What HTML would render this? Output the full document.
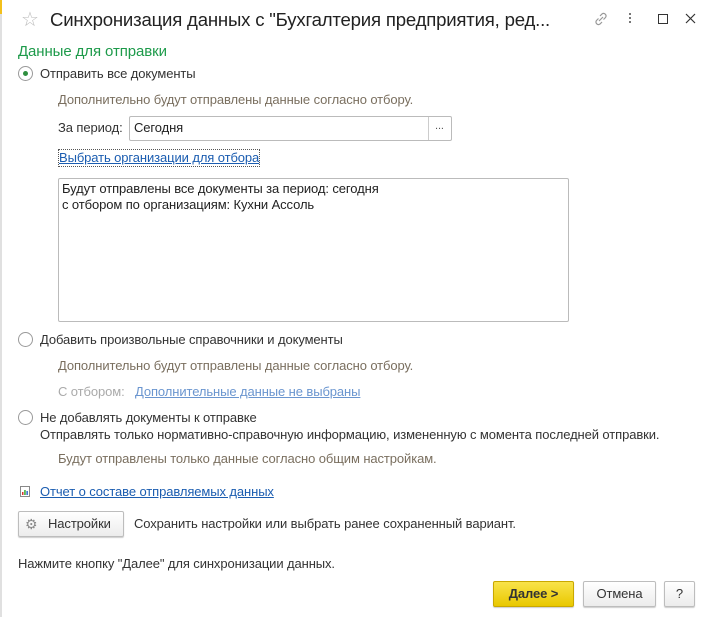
<!DOCTYPE html>
<html><head><meta charset="utf-8"><style>
body{margin:0;width:710px;height:617px;background:#fff;font-family:"Liberation Sans",Arial,sans-serif;font-size:13px;color:#333;position:relative;overflow:hidden;letter-spacing:-0.1px}
.a{position:absolute;white-space:nowrap;line-height:16px}
.g{color:#7a6f5f}
.lnk{color:#1a5cb0;text-decoration:underline}
.radio{position:absolute;width:13px;height:13px;border:1px solid #9a9a9a;border-radius:50%;background:#fff}
.btn{position:absolute;border:1px solid #bdbdbd;border-radius:2px;background:linear-gradient(#fff,#ececec);box-shadow:0 1px 1px rgba(0,0,0,.2);text-align:center;line-height:24px;height:24px}
</style></head><body>
<div style="position:absolute;left:0;top:0;width:2px;height:617px;background:#e0e0e0"></div>
<div style="position:absolute;left:0;top:0;width:2px;height:14px;background:#f3c01b"></div>
<div class="a" style="left:21px;top:9px;font-size:20px;color:#bbb;line-height:22px">☆</div>
<div class="a" style="left:50px;top:8px;font-size:18.6px;color:#222;line-height:24px;letter-spacing:-0.2px">Синхронизация данных с "Бухгалтерия предприятия, ред...</div>
<svg style="position:absolute;left:592px;top:10px" width="18" height="18" viewBox="0 0 18 18" fill="none" stroke="#999" stroke-width="1.2"><path d="M7 11l4-4M6.5 8.5L4.5 10.5a2.5 2.5 0 003.5 3.5l2-2M11.5 9.5l2-2a2.5 2.5 0 00-3.5-3.5l-2 2"/></svg>
<div style="position:absolute;left:629px;top:13px;width:2px;height:2px;background:#777;box-shadow:0 4px #777,0 8px #777"></div>
<div style="position:absolute;left:658px;top:14px;width:8px;height:8px;border:1px solid #333"></div>
<svg style="position:absolute;left:685px;top:13px" width="11" height="11" viewBox="0 0 11 11" stroke="#333" stroke-width="1.2"><path d="M1 1l9 9M10 1l-9 9"/></svg>

<div class="a" style="left:18px;top:43px;font-size:15px;color:#1d9a4a;line-height:18px">Данные для отправки</div>
<div class="radio" style="left:18px;top:66px"><div style="position:absolute;left:4px;top:4px;width:5px;height:5px;border-radius:50%;background:#2f8f3f"></div></div>
<div class="a" style="left:40px;top:66px">Отправить все документы</div>
<div class="a g" style="left:58px;top:92px">Дополнительно будут отправлены данные согласно отбору.</div>
<div class="a" style="left:58px;top:120px">За период:</div>
<div style="position:absolute;left:129px;top:116px;width:321px;height:23px;border:1px solid #bbb;border-radius:2px"></div>
<div style="position:absolute;left:428px;top:117px;width:1px;height:23px;background:#ccc"></div>
<div class="a" style="left:134px;top:120px;color:#222">Сегодня</div>
<div class="a" style="left:435px;top:118px;font-size:11px;color:#555">...</div>
<div class="a lnk" style="left:59px;top:150px;outline:1px dotted #555">Выбрать организации для отбора</div>
<div style="position:absolute;left:58px;top:178px;width:509px;height:142px;border:1px solid #bbb;border-radius:2px"></div>
<div class="a" style="left:62px;top:181px;color:#222">Будут отправлены все документы за период: сегодня<br>с отбором по организациям: Кухни Ассоль</div>

<div class="radio" style="left:18px;top:332px"></div>
<div class="a" style="left:40px;top:332px">Добавить произвольные справочники и документы</div>
<div class="a g" style="left:58px;top:358px">Дополнительно будут отправлены данные согласно отбору.</div>
<div class="a" style="left:58px;top:384px;color:#aaa">С отбором:</div>
<div class="a lnk" style="left:135px;top:384px;color:#6a95cf">Дополнительные данные не выбраны</div>
<div class="radio" style="left:18px;top:410px"></div>
<div class="a" style="left:40px;top:410px">Не добавлять документы к отправке</div>
<div class="a" style="left:40px;top:427px">Отправлять только нормативно-справочную информацию, измененную с момента последней отправки.</div>
<div class="a g" style="left:58px;top:451px">Будут отправлены только данные согласно общим настройкам.</div>

<svg style="position:absolute;left:19px;top:485px" width="12" height="13" viewBox="0 0 12 13"><rect x="1.5" y="1.5" width="9" height="10" fill="#fff" stroke="#888"/><rect x="3" y="7" width="1.5" height="3" fill="#d33"/><rect x="5.2" y="5" width="1.5" height="5" fill="#3a3"/><rect x="7.4" y="6" width="1.5" height="4" fill="#36c"/></svg>
<div class="a lnk" style="left:40px;top:484px">Отчет о составе отправляемых данных</div>
<div class="btn" style="left:18px;top:511px;width:104px"><span style="position:absolute;left:6px;top:0;color:#888;font-size:14px">⚙</span><span style="position:absolute;left:29px">Настройки</span></div>
<div class="a" style="left:134px;top:516px">Сохранить настройки или выбрать ранее сохраненный вариант.</div>
<div class="a" style="left:18px;top:556px">Нажмите кнопку "Далее" для синхронизации данных.</div>
<div class="btn" style="left:493px;top:581px;width:79px;background:linear-gradient(#f9e34a,#e9c800);border-color:#c9a800;font-weight:bold;color:#333">Далее &gt;</div>
<div class="btn" style="left:583px;top:581px;width:71px">Отмена</div>
<div class="btn" style="left:664px;top:581px;width:29px">?</div>
</body></html>
